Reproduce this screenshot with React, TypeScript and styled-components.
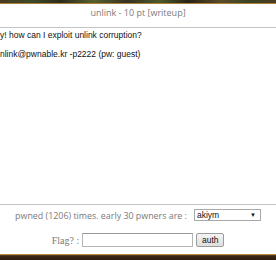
import styled, { createGlobalStyle } from 'styled-components';

const GlobalStyle = createGlobalStyle`
  html, body {
    margin: 0;
    padding: 0;
    background: #ffffff;
  }
`;

const Frame = styled.div`
  width: 276px;
  height: 260px;
  display: flex;
  flex-direction: column;
  overflow: hidden;
  background: #ffffff;
`;

const TopEdge = styled.div`
  height: 3px;
  flex-shrink: 0;
  border-bottom: 1px solid #a8833c;
  background: linear-gradient(
    90deg,
    #4a3a22 0%,
    #3c4a26 12%,
    #2e2a1a 22%,
    #56602e 34%,
    #3a3020 46%,
    #4c5a2c 58%,
    #2a2216 68%,
    #5a4a2a 80%,
    #3a4424 90%,
    #4a3a22 100%
  );
`;

const Header = styled.header`
  height: 24px;
  flex-shrink: 0;
  border-bottom: 1px solid #c4c4c4;
  display: flex;
  justify-content: center;
  padding-top: 3px;
  box-sizing: border-box;
`;

const Title = styled.span`
  font-family: 'Open Sans', 'Noto Sans', sans-serif;
  font-size: 9px;
  line-height: 12px;
  color: #7a7a7a;
`;

const Body = styled.main`
  flex: 1;
  padding-top: 1px;
`;

const Line = styled.p`
  margin: 0 0 7px;
  font-family: 'Liberation Sans', Arial, sans-serif;
  font-size: 8.5px;
  line-height: 12px;
  color: #111111;
  white-space: nowrap;
`;

const Footer = styled.footer`
  flex-shrink: 0;
  border-top: 1px solid #c4c4c4;
  padding: 3px 0 7px;
  display: flex;
  flex-direction: column;
  align-items: center;
  gap: 11px;
`;

const Row = styled.div<{ $gap: number }>`
  display: flex;
  align-items: center;
  gap: ${({ $gap }) => $gap}px;
  height: 14px;
`;

const Label = styled.span<{ $serif?: boolean }>`
  font-family: ${({ $serif }) =>
    $serif ? "'Liberation Serif', serif" : "'Open Sans', 'Noto Sans', sans-serif"};
  font-size: ${({ $serif }) => ($serif ? '10px' : '8.9px')};
  color: #7a7a7a;
  white-space: nowrap;
`;

const SelectBox = styled.div`
  position: relative;
  width: 67px;
  height: 12px;
  box-sizing: border-box;
  border: 1px solid #a9a9a9;
  background: #ffffff;
  font-family: 'Liberation Sans', Arial, sans-serif;
  font-size: 8.5px;
  line-height: 10px;
  color: #111;
  padding-left: 2px;
`;

const Arrow = styled.span`
  position: absolute;
  right: 4px;
  top: 0;
  font-size: 6px;
  line-height: 10px;
  color: #111;
`;

const FlagInput = styled.input`
  width: 111px;
  height: 14px;
  box-sizing: border-box;
  border: 1px solid #b5b5b5;
  border-top-color: #9a9a9a;
  padding: 0 2px;
  margin: 0;
  outline: none;
  background: #ffffff;
`;

const AuthButton = styled.button`
  width: 28px;
  height: 14px;
  box-sizing: border-box;
  padding: 0;
  margin: 0;
  border: 1px solid #9c9c9c;
  border-radius: 2px;
  background: linear-gradient(#f4f4f4, #dedede);
  font-family: 'Liberation Sans', Arial, sans-serif;
  font-size: 8.5px;
  line-height: 12px;
  color: #111;
`;

const BottomEdge = styled.div`
  height: 5px;
  flex-shrink: 0;
  border-top: 1px solid #b48c44;
  background: linear-gradient(#6a4a2a 0px, #3a2614 1px, #2c1c10 100%);
`;

const App = () => {
  return (
    <Frame>
      <GlobalStyle />
      <TopEdge />
      <Header>
        <Title>unlink - 10 pt [writeup]</Title>
      </Header>
      <Body>
        <Line>y! how can I exploit unlink corruption?</Line>
        <Line>nlink@pwnable.kr -p2222 (pw: guest)</Line>
      </Body>
      <Footer>
        <Row $gap={7}>
          <Label>pwned (1206) times. early 30 pwners are :</Label>
          <SelectBox>
            akiym
            <Arrow>▼</Arrow>
          </SelectBox>
        </Row>
        <Row $gap={3}>
          <Label $serif>Flag? :</Label>
          <FlagInput type="text" />
          <AuthButton>auth</AuthButton>
        </Row>
      </Footer>
      <BottomEdge />
    </Frame>
  );
};

export default App;
